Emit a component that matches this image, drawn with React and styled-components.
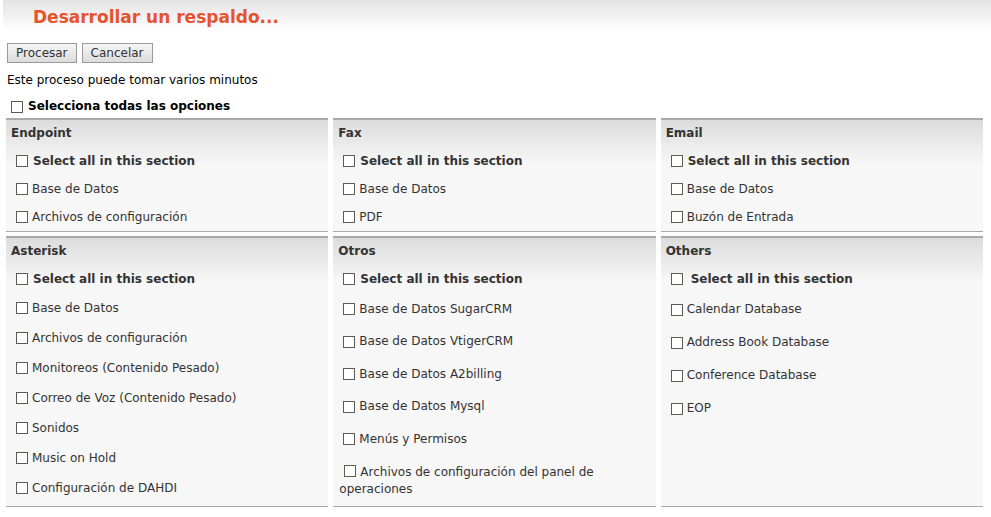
import React from "react";
import styled, { createGlobalStyle } from "styled-components";

const GlobalStyle = createGlobalStyle`
  body {
    margin: 0;
    background: #fff;
    font-family: "DejaVu Sans", Verdana, sans-serif;
    font-size: 12px;
    color: #000;
  }
`;

const TitleBar = styled.div`
  height: 32px;
  box-sizing: border-box;
  margin-left: 3px;
  background: linear-gradient(to bottom, #e4e4e4 0%, #ffffff 100%);
  display: flex;
  align-items: center;
  padding: 2px 0 0 30px;
`;

const Title = styled.h1`
  margin: 0;
  font-size: 17px;
  font-weight: bold;
  color: #e5532f;
`;

const Toolbar = styled.div`
  display: flex;
  gap: 5px;
  padding: 11px 0 0 7px;
`;

const Button = styled.button`
  height: 20px;
  padding: 0 8px;
  font-family: "DejaVu Sans", Verdana, sans-serif;
  font-size: 12px;
  color: #333;
  border: 1px solid #9a9a9a;
  border-radius: 0;
  background: linear-gradient(to bottom, #f6f6f6, #dcdcdc);
`;

const Note = styled.p`
  margin: 9px 0 0 7px;
  line-height: 17px;
`;

const SelectAll = styled.label`
  display: flex;
  align-items: center;
  margin: 9px 0 0 11px;
  font-weight: bold;
  line-height: 17px;
`;

const Box = styled.span`
  display: inline-block;
  box-sizing: border-box;
  width: 12px;
  height: 12px;
  border: 1px solid #5e5a55;
  background: #fff;
  margin: ${(p) => p.$margin || "0 4px 0 0"};
  vertical-align: -1px;
`;

const Grid = styled.div`
  display: grid;
  grid-template-columns: repeat(3, 1fr);
  column-gap: 5px;
  row-gap: 4px;
  padding: 3px 8px 0 6px;
`;

const Cell = styled.div`
  border-top: 2px solid #a9a9a9;
  border-bottom: 1px solid #a9a9a9;
  background: linear-gradient(to bottom, #dcdcdc 0px, #f7f7f7 44px, #f7f7f7 100%);
  display: flex;
  flex-direction: column;
`;

const CellHead = styled.div`
  height: 27px;
  line-height: 26px;
  padding-left: 5px;
  font-weight: bold;
  color: #333;
`;

const Item = styled.div`
  min-height: ${(p) => p.$h}px;
  box-sizing: border-box;
  padding: ${(p) => p.$pad};
  line-height: 17px;
  color: #333;
  font-weight: ${(p) => (p.$bold ? "bold" : "normal")};
  display: flex;
  align-items: center;
`;

const Wrap = styled.span`
  display: block;
`;

const sections = [
  { name: "Endpoint", h: 28, items: ["Base de Datos", "Archivos de configuración"] },
  { name: "Fax", h: 28, items: ["Base de Datos", "PDF"] },
  { name: "Email", h: 28, items: ["Base de Datos", "Buzón de Entrada"] },
  {
    name: "Asterisk",
    h: 30,
    items: [
      "Base de Datos",
      "Archivos de configuración",
      "Monitoreos (Contenido Pesado)",
      "Correo de Voz (Contenido Pesado)",
      "Sonidos",
      "Music on Hold",
      "Configuración de DAHDI",
    ],
  },
  {
    name: "Otros",
    h: 32.5,
    items: [
      "Base de Datos SugarCRM",
      "Base de Datos VtigerCRM",
      "Base de Datos A2billing",
      "Base de Datos Mysql",
      "Menús y Permisos",
      "Archivos de configuración del panel de operaciones",
    ],
  },
  {
    name: "Others",
    h: 33,
    wide: true,
    items: ["Calendar Database", "Address Book Database", "Conference Database", "EOP"],
  },
];

function Section({ s }) {
  return (
    <Cell>
      <CellHead>{s.name}</CellHead>
      <Item $h={28} $pad="0 0 0 10px" $bold>
        <Box $margin={s.wide ? "0 8px 0 0" : "0 5px 0 0"} />
        Select all in this section
      </Item>
      {s.items.map((it) =>
        it.length > 40 ? (
          <Item key={it} $h={49} $pad="8px 6px 8px 6px">
            <Wrap>
              <Box $margin="0 4px 0 5px" />
              {it}
            </Wrap>
          </Item>
        ) : (
          <Item key={it} $h={s.h} $pad="0 0 0 10px">
            <Box />
            {it}
          </Item>
        )
      )}
    </Cell>
  );
}

export default function App() {
  return (
    <>
      <GlobalStyle />
      <TitleBar>
        <Title>Desarrollar un respaldo...</Title>
      </TitleBar>
      <Toolbar>
        <Button>Procesar</Button>
        <Button>Cancelar</Button>
      </Toolbar>
      <Note>Este proceso puede tomar varios minutos</Note>
      <SelectAll>
        <Box $margin="0 5px 0 0" />
        Selecciona todas las opciones
      </SelectAll>
      <Grid>
        {sections.map((s) => (
          <Section key={s.name} s={s} />
        ))}
      </Grid>
    </>
  );
}
